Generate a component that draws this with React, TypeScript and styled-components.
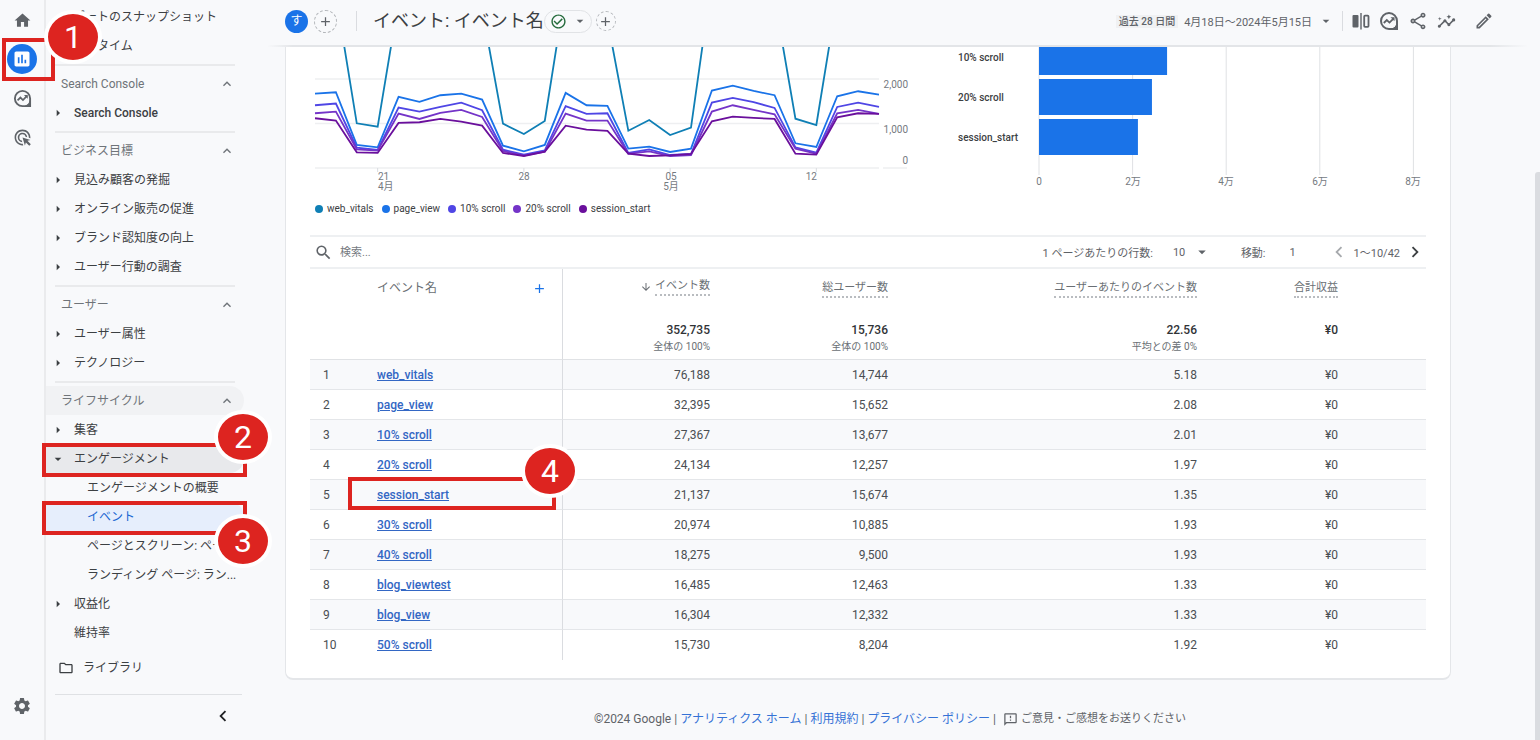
import React from 'react';
import styled, { createGlobalStyle, css } from 'styled-components';
import {
  MdAdd,
  MdAdsClick,
  MdArrowDownward,
  MdArrowDropDown,
  MdArrowRight,
  MdCheckCircleOutline,
  MdChevronLeft,
  MdChevronRight,
  MdExpandLess,
  MdHome,
  MdInsertChart,
  MdInsights,
  MdOutlineFeedback,
  MdOutlineFolder,
  MdOutlineModeEdit,
  MdOutlineShare,
  MdSearch,
  MdSettings,
} from 'react-icons/md';

const GlobalStyle = createGlobalStyle`
  *, *::before, *::after { box-sizing: border-box; }
  body {
    margin: 0;
    background: #f8f9fb;
    color: #3c4043;
    font-family: Roboto, "Noto Sans CJK JP", sans-serif;
    font-size: 12px;
  }
  button, input, select {
    margin: 0;
    padding: 0;
    border: 0;
    background: none;
    color: inherit;
    font: inherit;
  }
  button { cursor: pointer; }
  svg { display: block; flex: none; }
`;

const Page = styled.div`
  position: relative;
  display: flex;
  min-height: 100vh;
`;

/* ---------- numbered call-outs ---------- */

const Frame = styled.span<{ $inset: string }>`
  position: absolute;
  inset: ${(p) => p.$inset};
  border: 4px solid #dd2420;
  pointer-events: none;
`;

const Badge = styled.span<{ $top: number; $right: number }>`
  position: absolute;
  top: ${(p) => p.$top}px;
  right: ${(p) => p.$right}px;
  z-index: 3;
  display: flex;
  align-items: center;
  justify-content: center;
  width: 58px;
  height: 54px;
  border: 4px solid #fff;
  border-radius: 50%;
  background: #dd2420;
  color: #fff;
  font-size: 32px;
  font-weight: 400;
  line-height: 32px;
`;

/* ---------- icon rail ---------- */

const Rail = styled.nav`
  display: flex;
  flex-direction: column;
  align-items: center;
  width: 46px;
  flex: none;
  padding: 5px 0 19px;
  border-right: 2px solid #eaebed;
  color: #5f6368;
`;

const RailButton = styled.button<{ $last?: boolean }>`
  position: relative;
  display: flex;
  align-items: center;
  justify-content: center;
  width: 30px;
  height: 30px;
  margin-bottom: 9px;
  border-radius: 50%;
  ${(p) => p.$last && css`margin: auto 0 0;`}
`;

const ActiveRailButton = styled(RailButton)`
  background: #1a73e8;
  color: #fff;
`;

/* ---------- report navigation ---------- */

const Nav = styled.nav`
  position: relative;
  z-index: 2;
  width: 222px;
  flex: none;
  padding: 2px 0 0;
`;

const rowBase = css`
  position: relative;
  display: flex;
  align-items: center;
  width: 198px;
  height: 29px;
  text-align: left;
  text-decoration: none;
  line-height: 16px;
  white-space: nowrap;
`;

const NavLink = styled.a<{ $indent: number; $active?: boolean }>`
  ${rowBase}
  padding-left: ${(p) => p.$indent}px;
  color: ${(p) => (p.$active ? '#1967d2' : '#3c4043')};
  border-radius: 0 15px 15px 0;
  background: ${(p) => (p.$active ? '#e6eefc' : 'transparent')};
`;

const NavGroup = styled.button<{ $open?: boolean; $strong?: boolean }>`
  ${rowBase}
  gap: 8px;
  padding-left: 4px;
  border-radius: 0 15px 15px 0;
  background: ${(p) => (p.$open ? '#e8e9ec' : 'transparent')};
  font-weight: ${(p) => (p.$strong ? 500 : 400)};
`;

const SectionButton = styled.button<{ $current?: boolean }>`
  ${rowBase}
  justify-content: space-between;
  padding: 0 9px 0 15px;
  border-radius: 0 15px 15px 0;
  background: ${(p) => (p.$current ? '#f1f2f4' : 'transparent')};
  color: #6f7479;
`;

const NavRule = styled.hr`
  width: 180px;
  height: 2px;
  margin: 4px 0 3px 9px;
  border: 0;
  background: #e9eaec;
`;

const LibraryLink = styled.a`
  ${rowBase}
  gap: 9px;
  margin-top: 6px;
  padding-left: 12px;
  color: #3c4043;
`;

const NavFoot = styled.div`
  display: flex;
  justify-content: flex-end;
  width: 187px;
  margin: 12px 0 0 9px;
  padding: 10px 8px 0 0;
  border-top: 1px solid #dfe1e4;
  color: #202124;
`;

/* ---------- report header ---------- */

const Main = styled.main`
  flex: 1;
  min-width: 0;
`;

const Header = styled.header`
  display: flex;
  align-items: center;
  height: 47px;
  padding: 0 46px 3px 17px;
  border-bottom: 2px solid;
  border-image: linear-gradient(90deg, #f8f9fb, #e3e5e8 2%, #e3e5e8 96%, #f8f9fb 99%) 1;
  color: #5f6368;
  white-space: nowrap;
`;

const Avatar = styled.span`
  width: 23px;
  height: 23px;
  border-radius: 50%;
  background: #1a73e8;
  color: #fff;
  font-size: 12px;
  line-height: 22px;
  text-align: center;
`;

const DashedButton = styled.button<{ $size: number }>`
  display: flex;
  align-items: center;
  justify-content: center;
  width: ${(p) => p.$size}px;
  height: ${(p) => p.$size}px;
  border: 1px dashed #b4b7bb;
  border-radius: 50%;
`;

const Divider = styled.span`
  width: 1px;
  height: 20px;
  background: #dadce0;
`;

const Title = styled.h1`
  margin: 0 0 0 16px;
  color: #3c4043;
  font-size: 18px;
  font-weight: 400;
  line-height: 24px;
`;

const StatusButton = styled.button`
  display: flex;
  align-items: center;
  gap: 5px;
  height: 23px;
  margin-right: 4px;
  padding: 0 3px 0 5px;
  border: 1px solid #e1e3e6;
  border-radius: 12px;
`;

const LeftTools = styled.div`
  display: flex;
  align-items: center;
  gap: 6px;
  margin-right: 19px;
`;

const DateButton = styled.button`
  display: flex;
  align-items: center;
  gap: 6px;
  margin-left: auto;
  font-size: 11px;
`;

const Chip = styled.span`
  padding: 0 3px;
  background: #f0f1f3;
  font-size: 10px;
  font-weight: 500;
  line-height: 13px;
`;

const Tools = styled.div`
  display: flex;
  align-items: center;
  gap: 9px;
  margin-left: 8px;
`;

const ToolButton = styled.button<{ $gapBefore?: boolean }>`
  margin-left: ${(p) => (p.$gapBefore ? 9 : 0)}px;
`;

/* ---------- report card ---------- */

const Card = styled.section`
  margin: 0 89px 0 17px;
  padding: 0 24px 18px;
  border: 1px solid #e4e6e9;
  border-width: 0 1px 2px;
  border-radius: 0 0 8px 8px;
  background: #fff;
`;

const Charts = styled.div`
  display: grid;
  grid-template-columns: 600fr 516fr;
`;

const Chart = styled.svg`
  width: 100%;
  height: auto;
  font-size: 10px;
`;

const Legend = styled.ul`
  display: flex;
  gap: 8px;
  margin: 0;
  padding: 5px 5px 18px;
  list-style: none;
  font-size: 10px;
  line-height: 16px;
`;

const LegendItem = styled.li<{ $color: string }>`
  display: flex;
  align-items: center;
  gap: 4px;
  &::before {
    content: '';
    width: 8px;
    height: 8px;
    border-radius: 50%;
    background: ${(p) => p.$color};
  }
`;

const TableBar = styled.div`
  display: flex;
  align-items: center;
  height: 34px;
  padding: 0 0 0 4px;
  border: solid #eef0f2;
  border-width: 2px 0;
  color: #5f6368;
  font-size: 11px;
`;

const SearchLabel = styled.label`
  display: flex;
  align-items: center;
  gap: 7px;
  flex: 1;
`;

const SearchInput = styled.input`
  flex: 1;
  outline: 0;
  &::placeholder { color: #757a7f; opacity: 1; }
`;

const Field = styled.label<{ $gap: number }>`
  display: flex;
  align-items: center;
  gap: ${(p) => p.$gap}px;
`;

const RowsSelect = styled.select`
  width: 16px;
  margin-right: -16px;
  appearance: none;
`;

const PageInput = styled.input`
  width: 34px;
`;

const Pager = styled.div`
  display: flex;
  align-items: center;
  gap: 4px;
`;

const FieldGroup = styled.div`
  display: flex;
  align-items: center;
  gap: 30px;
  margin-right: 4px;
`;

const DataTable = styled.table`
  width: 100%;
  table-layout: fixed;
  border-collapse: separate;
  border-spacing: 0;
  color: #4a4e52;
  font-size: 12px;
  line-height: 18px;
`;

const Col = styled.col<{ $w: number }>`
  width: ${(p) => p.$w}px;
`;

const cell = css`
  padding: 0;
  font-weight: 400;
  text-align: right;
  vertical-align: top;
  &:nth-child(1), &:nth-child(2) { text-align: left; }
  &:nth-child(1) { padding-left: 13px; }
  &:nth-child(2) { border-right: 1px solid #dadce0; }
  &:last-child { padding-right: 88px; }
`;

const HeadCell = styled.th`
  ${cell}
  height: 44px;
  padding-top: 9px;
  color: #6a6f74;
`;

const TotalCell = styled.td`
  ${cell}
  height: 47px;
  padding-top: 8px;
  border-bottom: 1px solid #e0e2e5;
`;

const BodyRow = styled.tr`
  &:nth-child(odd) { background: #f8f9fb; }
  &:last-child td { border-bottom: 0; }
`;

const BodyCell = styled.td`
  ${cell}
  position: relative;
  height: 30px;
  border-bottom: 1px solid #e4e6e9;
  vertical-align: middle;
`;

const DimensionHead = styled.div`
  display: flex;
  align-items: center;
  justify-content: space-between;
  padding: 1px 15px 0 0;
`;

const AddButton = styled.button`
  color: #1a73e8;
`;

const MetricHead = styled.button`
  display: inline-flex;
  align-items: center;
  gap: 3px;
  font-size: 11px;
  line-height: 16px;
`;

const MetricName = styled.span`
  border-bottom: 2px dotted #b9bcc0;
`;

const TotalValue = styled.strong`
  display: block;
  color: #303336;
  font-weight: 500;
`;

const TotalNote = styled.span`
  display: block;
  color: #6a6f74;
  font-size: 10px;
  line-height: 16px;
`;

const EventLink = styled.a`
  color: #3367c4;
  font-weight: 500;
  text-decoration: underline;
`;

const Footer = styled.footer`
  display: flex;
  align-items: center;
  justify-content: center;
  gap: 3px;
  padding: 30px 28px 9px 0;
  color: #5f6368;
  font-size: 12px;
  line-height: 18px;
`;

const FooterLink = styled.a`
  color: #3572d6;
  text-decoration: none;
`;

const FeedbackButton = styled.button`
  display: flex;
  align-items: center;
  gap: 3px;
  margin-left: 4px;
  font-size: 11px;
`;

const ScrollThumb = styled.div`
  position: absolute;
  top: 172px;
  right: 0;
  bottom: 0;
  width: 5px;
  border-radius: 3px 0 0 0;
  background: #dadce0;
`;

/* ---------- drawings ---------- */

const ExploreIcon = ({ size = 20 }: { size?: number }) => (
  <svg width={size} height={size} viewBox="0 0 20 20" fill="none" stroke="currentColor" strokeWidth="2">
    <path d="M10 2a8 8 0 1 0 0 16h8v-8a8 8 0 0 0-8-8z" />
    <path d="M18 13v5h-5a8 8 0 0 0 5-5z" fill="currentColor" strokeWidth="1" />
    <path d="M4.800 12l3-3 2.700 2.600 4.200-4.300" strokeWidth="1.800" />
    <path d="M11.500 6.300h4v4z" fill="currentColor" stroke="none" />
  </svg>
);

const CompareIcon = () => (
  <svg width="18" height="18" viewBox="0 0 18 18" fill="none" stroke="currentColor" strokeWidth="1.800">
    <rect x="0.500" y="3" width="6" height="12.500" rx="1" fill="currentColor" stroke="none" />
    <path d="M9 1v16.500" strokeWidth="1.400" />
    <rect x="12.200" y="3.600" width="4.300" height="11.200" rx="0.800" />
  </svg>
);

interface Series {
  name: string;
  color: string;
  values: number[];
}

const series: Series[] = [
  {
    name: 'web_vitals',
    color: '#0f7fb5',
    values: [3800, 3888, 1004, 928, 3753, 3800, 3800, 3800, 3573, 996, 764, 1056, 4022, 3800, 3326, 838, 1079, 742, 906, 4247, 3800, 3800, 3820, 1108, 966, 3843, 3800, 3800],
  },
  {
    name: 'page_view',
    color: '#1a73e8',
    values: [1672, 1702, 518, 465, 1598, 1485, 1635, 1672, 1538, 502, 375, 518, 1688, 1410, 1395, 435, 480, 360, 435, 1740, 1852, 1732, 1635, 555, 472, 1612, 1725, 1650],
  },
  {
    name: '10% scroll',
    color: '#4f46e5',
    values: [1410, 1448, 458, 405, 1358, 1268, 1372, 1470, 1298, 412, 300, 398, 1388, 1215, 1230, 338, 420, 292, 315, 1470, 1575, 1478, 1350, 465, 345, 1372, 1470, 1372],
  },
  {
    name: '20% scroll',
    color: '#7434c8',
    values: [1230, 1268, 420, 390, 1222, 1102, 1238, 1305, 1148, 382, 278, 368, 1222, 1065, 1065, 322, 375, 270, 292, 1268, 1410, 1305, 1208, 435, 322, 1230, 1305, 1215],
  },
  {
    name: 'session_start',
    color: '#6a0f9c',
    values: [1118, 1065, 352, 338, 1012, 1028, 1102, 1042, 952, 338, 270, 368, 952, 862, 832, 322, 270, 285, 315, 1050, 1155, 1125, 1102, 322, 300, 1140, 1230, 1215],
  },
];

const lineX = (i: number) => 5 + (i * 564) / 27;
const lineY = (v: number) => 121 - (v * 44.5) / 1000;

const LineChart = () => (
  <Chart viewBox="0 0 600 149" role="img" aria-label="イベント数の推移">
    {[0, 1000, 2000].map((v) => (
      <path key={v} d={`M5 ${lineY(v)}H569`} stroke="#eeeff1" strokeWidth="1.500" />
    ))}
    <path d="M573 121H597" stroke="#eeeff1" strokeWidth="1.500" />
    {[3, 10, 17, 24].map((i) => (
      <path key={i} d={`M${lineX(i)} 121v4`} stroke="#dadce0" />
    ))}
    {series.map((s) => (
      <polyline
        key={s.name}
        points={s.values.map((v, i) => `${lineX(i)},${lineY(v)}`).join(' ')}
        fill="none"
        stroke={s.color}
        strokeWidth="1.800"
      />
    ))}
    <g fill="#757a7f">
      <text x="598" y="41" textAnchor="end">2,000</text>
      <text x="598" y="86" textAnchor="end">1,000</text>
      <text x="598" y="117" textAnchor="end">0</text>
      <text x="68" y="133">21</text>
      <text x="68" y="143">4月</text>
      <text x="214" y="133" textAnchor="middle">28</text>
      <text x="361" y="133" textAnchor="middle">05</text>
      <text x="361" y="143" textAnchor="middle">5月</text>
      <text x="507" y="133" textAnchor="end">12</text>
    </g>
  </Chart>
);

const bars = [
  { name: '10% scroll', value: 27367, y: -8 },
  { name: '20% scroll', value: 24134, y: 32 },
  { name: 'session_start', value: 21137, y: 72 },
];

const barX = (v: number) => 129 + (v * 93.6) / 20000;

const BarChart = () => (
  <Chart viewBox="0 0 516 149" role="img" aria-label="イベント名別のイベント数">
    {[0, 20000, 40000, 60000, 80000].map((v) => (
      <path key={v} d={`M${barX(v)} 0V128`} stroke="#dfe1e4" />
    ))}
    {bars.map((b) => (
      <React.Fragment key={b.name}>
        <rect x="129" y={b.y} width={barX(b.value) - 129} height="36" fill="#1a73e8" />
        <text x="48" y={b.y + 22} fill="#3c4043" fontWeight="500">{b.name}</text>
      </React.Fragment>
    ))}
    <g fill="#757a7f" textAnchor="middle">
      <text x="129" y="138">0</text>
      <text x="223" y="138">2万</text>
      <text x="316" y="138">4万</text>
      <text x="410" y="138">6万</text>
      <text x="503" y="138">8万</text>
    </g>
  </Chart>
);

/* ---------- content ---------- */

interface GroupProps {
  label: string;
  open?: boolean;
  strong?: boolean;
  children?: React.ReactNode;
}

const Group = ({ label, open, strong, children }: GroupProps) => (
  <NavGroup $open={open} $strong={strong} aria-expanded={!!open}>
    {open ? <MdArrowDropDown size={16} /> : <MdArrowRight size={16} />}
    {label}
    {children}
  </NavGroup>
);

const Section = ({ label, current }: { label: string; current?: boolean }) => (
  <SectionButton $current={current} aria-expanded="true">
    {label}
    <MdExpandLess size={16} />
  </SectionButton>
);

const metrics = [
  { name: 'イベント数', total: '352,735', note: '全体の 100%', sorted: true },
  { name: '総ユーザー数', total: '15,736', note: '全体の 100%' },
  { name: 'ユーザーあたりのイベント数', total: '22.56', note: '平均との差 0%' },
  { name: '合計収益', total: '¥0', note: '' },
];

const events = [
  ['web_vitals', '76,188', '14,744', '5.18'],
  ['page_view', '32,395', '15,652', '2.08'],
  ['10% scroll', '27,367', '13,677', '2.01'],
  ['20% scroll', '24,134', '12,257', '1.97'],
  ['session_start', '21,137', '15,674', '1.35'],
  ['30% scroll', '20,974', '10,885', '1.93'],
  ['40% scroll', '18,275', '9,500', '1.93'],
  ['blog_viewtest', '16,485', '12,463', '1.33'],
  ['blog_view', '16,304', '12,332', '1.33'],
  ['50% scroll', '15,730', '8,204', '1.92'],
];

const ReportNav = () => (
  <Nav aria-label="レポート">
    <NavLink href="#snapshot" $indent={15}>レポートのスナップショット</NavLink>
    <NavLink href="#realtime" $indent={15}>リアルタイム</NavLink>
    <NavRule />
    <Section label="Search Console" />
    <Group label="Search Console" strong />
    <NavRule />
    <Section label="ビジネス目標" />
    <Group label="見込み顧客の発掘" />
    <Group label="オンライン販売の促進" />
    <Group label="ブランド認知度の向上" />
    <Group label="ユーザー行動の調査" />
    <NavRule />
    <Section label="ユーザー" />
    <Group label="ユーザー属性" />
    <Group label="テクノロジー" />
    <NavRule />
    <Section label="ライフサイクル" current />
    <Group label="集客" />
    <Group label="エンゲージメント" open>
      <Frame $inset="-1px -3px -4px -4px" />
      <Badge $top={-34} $right={-28}>2</Badge>
    </Group>
    <NavLink href="#overview" $indent={41}>エンゲージメントの概要</NavLink>
    <NavLink href="#events" $indent={41} $active>
      イベント
      <Frame $inset="-1px -3px -4px -4px" />
      <Badge $top={12} $right={-28}>3</Badge>
    </NavLink>
    <NavLink href="#pages" $indent={41}>ページとスクリーン: ペー</NavLink>
    <NavLink href="#landing" $indent={41}>ランディング ページ: ラン...</NavLink>
    <Group label="収益化" />
    <NavLink href="#retention" $indent={28}>維持率</NavLink>
    <LibraryLink href="#library">
      <MdOutlineFolder size={16} />
      ライブラリ
    </LibraryLink>
    <NavFoot>
      <button aria-label="折りたたむ"><MdChevronLeft size={22} /></button>
    </NavFoot>
  </Nav>
);

export default function App() {
  return (
    <Page>
      <GlobalStyle />
      <Rail aria-label="メイン">
        <RailButton aria-label="ホーム"><MdHome size={19} /></RailButton>
        <ActiveRailButton aria-label="レポート">
          <MdInsertChart size={20} />
          <Frame $inset="-6px -18px -7px -5px" />
          <Badge $top={-34} $right={-65}>1</Badge>
        </ActiveRailButton>
        <RailButton aria-label="探索"><ExploreIcon size={19} /></RailButton>
        <RailButton aria-label="広告"><MdAdsClick size={19} /></RailButton>
        <RailButton aria-label="管理" $last><MdSettings size={20} /></RailButton>
      </Rail>
      <ReportNav />
      <Main>
        <Header>
          <LeftTools>
            <Avatar>す</Avatar>
            <DashedButton $size={23} aria-label="比較を追加"><MdAdd size={15} /></DashedButton>
          </LeftTools>
          <Divider />
          <Title>イベント: イベント名</Title>
          <StatusButton aria-label="データの状態">
            <MdCheckCircleOutline size={17} color="#256b3c" />
            <MdArrowDropDown size={16} />
          </StatusButton>
          <DashedButton $size={20} aria-label="フィルタを追加"><MdAdd size={15} /></DashedButton>
          <DateButton>
            <Chip>過去 28 日間</Chip>
            4月18日～2024年5月15日
            <MdArrowDropDown size={16} />
          </DateButton>
          <Tools>
            <Divider />
            <ToolButton aria-label="比較"><CompareIcon /></ToolButton>
            <ToolButton aria-label="探索を作成"><ExploreIcon /></ToolButton>
            <ToolButton aria-label="共有"><MdOutlineShare size={20} /></ToolButton>
            <ToolButton aria-label="インサイト"><MdInsights size={19} /></ToolButton>
            <ToolButton aria-label="編集" $gapBefore><MdOutlineModeEdit size={20} /></ToolButton>
          </Tools>
        </Header>

        <Card>
          <Charts>
            <LineChart />
            <BarChart />
          </Charts>
          <Legend>
            {series.map((s) => (
              <LegendItem key={s.name} $color={s.color}>{s.name}</LegendItem>
            ))}
          </Legend>

          <TableBar>
            <SearchLabel>
              <MdSearch size={19} />
              <SearchInput type="text" placeholder="検索..." aria-label="検索" />
            </SearchLabel>
            <FieldGroup>
              <Field $gap={20}>
                1 ページあたりの行数:
                <RowsSelect defaultValue="10">
                  <option>10</option>
                  <option>25</option>
                </RowsSelect>
                <MdArrowDropDown size={18} />
              </Field>
              <Field $gap={24}>
                移動:
                <PageInput type="text" defaultValue="1" />
              </Field>
            </FieldGroup>
            <Pager>
              <button aria-label="前へ"><MdChevronLeft size={22} color="#a6a9ad" /></button>
              1～10/42
              <button aria-label="次へ"><MdChevronRight size={22} color="#3c4043" /></button>
            </Pager>
          </TableBar>

          <DataTable>
            <colgroup>
              {[67, 186, 147, 178, 309, 229].map((w, i) => (
                <Col key={i} $w={w} />
              ))}
            </colgroup>
            <thead>
              <tr>
                <HeadCell />
                <HeadCell scope="col">
                  <DimensionHead>
                    イベント名
                    <AddButton aria-label="ディメンションを追加"><MdAdd size={15} /></AddButton>
                  </DimensionHead>
                </HeadCell>
                {metrics.map((m) => (
                  <HeadCell key={m.name} scope="col">
                    <MetricHead>
                      {m.sorted && <MdArrowDownward size={12} />}
                      <MetricName>{m.name}</MetricName>
                    </MetricHead>
                  </HeadCell>
                ))}
              </tr>
              <tr>
                <TotalCell />
                <TotalCell />
                {metrics.map((m) => (
                  <TotalCell key={m.name}>
                    <TotalValue>{m.total}</TotalValue>
                    <TotalNote>{m.note}</TotalNote>
                  </TotalCell>
                ))}
              </tr>
            </thead>
            <tbody>
              {events.map(([name, count, users, perUser], i) => (
                <BodyRow key={name}>
                  <BodyCell>{i + 1}</BodyCell>
                  <BodyCell>
                    <EventLink href={`#${i + 1}`}>{name}</EventLink>
                    {name === 'session_start' && (
                      <>
                        <Frame $inset="-3px 6px -1px -29px" />
                        <Badge $top={-36} $right={-17}>4</Badge>
                      </>
                    )}
                  </BodyCell>
                  <BodyCell>{count}</BodyCell>
                  <BodyCell>{users}</BodyCell>
                  <BodyCell>{perUser}</BodyCell>
                  <BodyCell>¥0</BodyCell>
                </BodyRow>
              ))}
            </tbody>
          </DataTable>
        </Card>

        <Footer>
          <span>©2024 Google</span>|
          <FooterLink href="#home">アナリティクス ホーム</FooterLink>|
          <FooterLink href="#terms">利用規約</FooterLink>|
          <FooterLink href="#privacy">プライバシー ポリシー</FooterLink>|
          <FeedbackButton>
            <MdOutlineFeedback size={15} />
            ご意見・ご感想をお送りください
          </FeedbackButton>
        </Footer>
      </Main>
      <ScrollThumb />
    </Page>
  );
}
